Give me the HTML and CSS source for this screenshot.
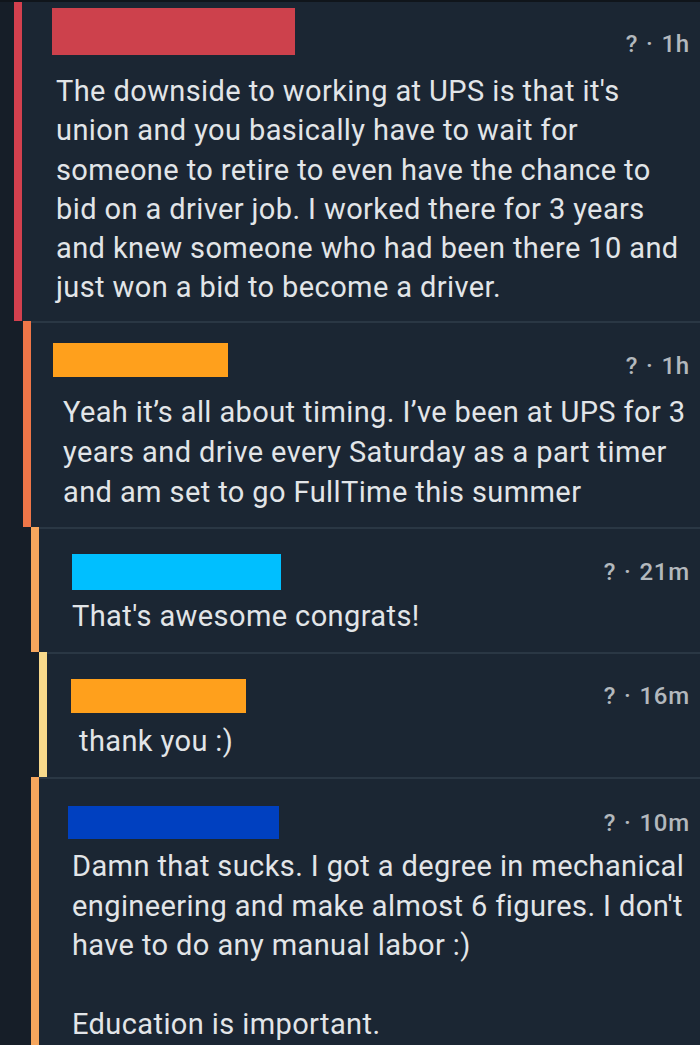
FILE: index.html
```html
<!DOCTYPE html>
<html>
<head>
<meta charset="utf-8">
<link rel="stylesheet" href="styles.css">
</head>
<body>
<div class="thread">
  <div class="comment c1">
    <div class="gutter g0"></div>
    <div class="bar red"></div>
    <div class="body first">
      <div class="head">
        <div class="name n1"></div>
        <div class="time t1">? · 1h</div>
      </div>
      <p class="text">The downside to working at UPS is that it's<br>union and you basically have to wait for<br>someone to retire to even have the chance to<br>bid on a driver job. I worked there for 3 years<br>and knew someone who had been there 10 and<br>just won a bid to become a driver.</p>
    </div>
  </div>
  <div class="comment c2">
    <div class="gutter g1"></div>
    <div class="bar orange"></div>
    <div class="body">
      <div class="head">
        <div class="name n2"></div>
        <div class="time">? · 1h</div>
      </div>
      <p class="text">Yeah it’s all about timing. I’ve been at UPS for 3<br>years and drive every Saturday as a part timer<br>and am set to go FullTime this summer</p>
    </div>
  </div>
  <div class="comment c3">
    <div class="gutter g2"></div>
    <div class="bar peach"></div>
    <div class="body">
      <div class="head">
        <div class="name n3"></div>
        <div class="time">? · 21m</div>
      </div>
      <p class="text">That's awesome congrats!</p>
    </div>
  </div>
  <div class="comment c4">
    <div class="gutter g3"></div>
    <div class="bar yellow"></div>
    <div class="body">
      <div class="head">
        <div class="name n4"></div>
        <div class="time">? · 16m</div>
      </div>
      <p class="text">thank you :)</p>
    </div>
  </div>
  <div class="comment c5">
    <div class="gutter g2"></div>
    <div class="bar peach"></div>
    <div class="body">
      <div class="head">
        <div class="name n5"></div>
        <div class="time">? · 10m</div>
      </div>
      <p class="text">Damn that sucks. I got a degree in mechanical<br>engineering and make almost 6 figures. I don't<br>have to do any manual labor :)<br><br>Education is important.</p>
    </div>
  </div>
</div>
</body>
</html>
```
FILE: styles.css
```css
html, body {
  margin: 0;
  padding: 0;
  background: #1b2633;
  width: 700px;
  height: 1045px;
  overflow: hidden;
}
.thread {
  border-top: 2px solid #10151b;
  font-family: Roboto, "Noto Sans", sans-serif;
}
.comment {
  display: flex;
}
.gutter {
  background: #161e28;
  flex: none;
}
.g0 { width: 14px; }
.g1 { width: 23px; }
.g2 { width: 31px; }
.g3 { width: 39px; }
.bar {
  width: 8px;
  flex: none;
}
.red { background: #d3404e; }
.orange { background: #ef7648; }
.peach { background: #f6a65d; }
.yellow { background: #f8d98b; }
.body {
  flex: 1;
  border-top: 2px solid #2a3744;
  padding-right: 10px;
}
.body.first { border-top: none; }
.head {
  display: flex;
  justify-content: space-between;
  align-items: center;
}
.name { flex: none; }
.time {
  color: #b3b8bd;
  font-size: 24px;
  font-weight: 500;
  line-height: 28px;
  letter-spacing: 0.8px;
  word-spacing: 1px;
}
.text {
  margin: 0;
  color: #e2e5e8;
  font-size: 29px;
  line-height: 39.3px;
  letter-spacing: 0.4px;
  white-space: nowrap;
}
/* comment 1 */
.c1 .body { padding: 6px 10px 13px 34px; }
.c1 .head { align-items: flex-end; }
.n1 { width: 243px; height: 47px; background: #cd414c; margin-left: -4px; }
.t1 { margin-bottom: -3px; }
.c1 .text { margin-top: 17px; }
/* comment 2 */
.c2 .body { padding: 17px 10px 15px 32px; }
.n2 { width: 175px; height: 34px; background: #ffa01c; margin-left: -10px; }
.c2 .head .time { margin-top: 12px; }
.c2 .text { margin-top: 12px; line-height: 40px; }
/* comment 3 */
.c3 .body { padding: 25px 10px 16px 33px; }
.n3 { width: 209px; height: 36px; background: #00bfff; }
.c3 .text { margin-top: 7px; }
/* comment 4 */
.c4 .body { padding: 25px 10px 16px 32px; }
.n4 { width: 175px; height: 34px; background: #ffa01c; margin-left: -8px; }
.c4 .text { margin-top: 9px; }
/* comment 5 */
.c5 .body { padding: 27px 10px 40px 33px; }
.n5 { width: 211px; height: 33px; background: #0040c0; margin-left: -4px; }
.c5 .text { margin-top: 8px; }
```
